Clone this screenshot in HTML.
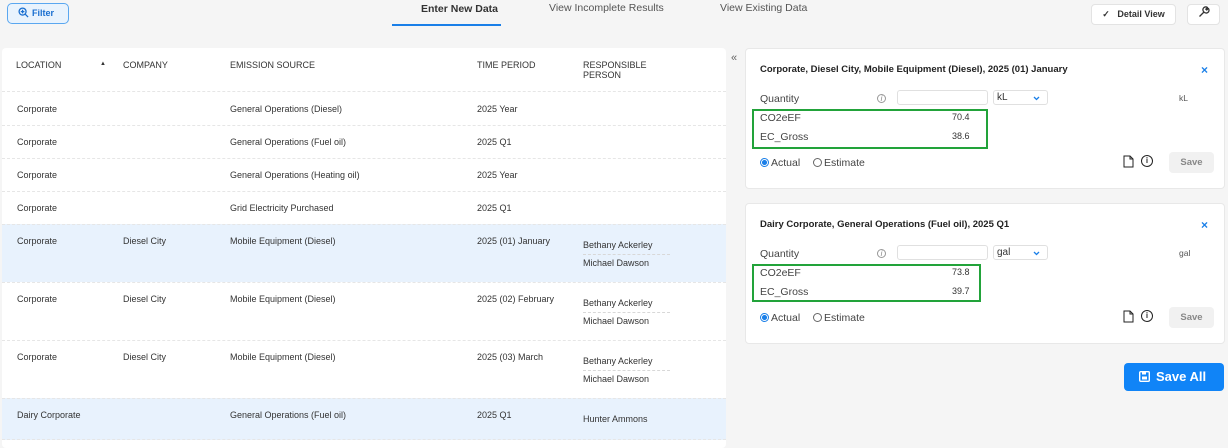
<!DOCTYPE html>
<html><head><style>
*{margin:0;padding:0;box-sizing:border-box}
body{width:1228px;height:444px;background:#f5f5f5;font-family:"Liberation Sans",sans-serif;color:#333;position:relative;overflow:hidden;font-size:9px}
.a{position:absolute;white-space:nowrap}
.panel{position:absolute;left:2px;top:48px;width:724px;height:400px;background:#fff;border-radius:4px}
.row{position:absolute;left:2px;width:724px;border-top:1px dashed #e6e6e6}
.hl{background:#e8f2fd}
.card{position:absolute;left:745px;width:480px;background:#fff;border:1px solid #e8e8e8;border-radius:4px}
.card .t{font-weight:bold;font-size:9.5px;color:#222}
.lbl{font-size:10.5px;color:#444}
.green{position:absolute;border:2px solid #22a33a}
.inp{position:absolute;border:1px solid #e0e0e0;border-radius:3px;background:#fff;height:15px}
.btn{position:absolute;background:#f1f1f1;border-radius:4px;color:#888;font-weight:bold;font-size:9.5px;text-align:center}
.radio{display:inline-block;width:9px;height:9px;border-radius:50%;border:1px solid #666;vertical-align:-1px;margin-right:2px}
.radio.on{border:1px solid #1a7fe8;background:radial-gradient(circle,#1a7fe8 2.3px,#fff 2.8px)}
</style></head><body>
<div class="a" style="left:7px;top:3px;width:62px;height:21px;border:1px solid #5aa7f0;border-radius:5px;background:#e9f3fd;color:#1a6fd0;font-weight:bold;font-size:9px;line-height:19px;padding-left:10px">
<svg width="11" height="11" viewBox="0 0 12 12" style="vertical-align:-2px;margin-right:3px"><circle cx="5" cy="5" r="3.8" fill="none" stroke="#1a6fd0" stroke-width="1.4"/><path d="M5 3v4M3 5h4M8 8l3 3" stroke="#1a6fd0" stroke-width="1.4"/></svg>Filter</div>
<div class="a" style="left:421px;top:3px;font-size:10.5px;font-weight:bold;color:#333">Enter New Data</div>
<div class="a" style="left:392px;top:24px;width:109px;height:2px;background:#1a7fe8"></div>
<div class="a" style="left:549px;top:2px;font-size:10.5px;color:#555">View Incomplete Results</div>
<div class="a" style="left:720px;top:2px;font-size:10.5px;color:#555">View Existing Data</div>
<div class="a" style="left:1091px;top:4px;width:85px;height:21px;background:#fff;border:1px solid #e3e3e3;border-radius:4px;font-size:9px;font-weight:bold;line-height:19px;text-align:center">✓&nbsp;&nbsp; Detail View</div>
<div class="a" style="left:1187px;top:4px;width:33px;height:21px;background:#fff;border:1px solid #e3e3e3;border-radius:4px;text-align:center;line-height:19px;font-size:11px">
<svg width="12" height="12" viewBox="0 0 12 12" style="vertical-align:-1px"><path d="M1.5 10.5l4.5-4.5M6 6a2.6 2.6 0 0 1 3.5-4.5l-1.7 1.7.9.9 1.7-1.7A2.6 2.6 0 0 1 6 6" fill="none" stroke="#333" stroke-width="1.3" stroke-linejoin="round"/></svg></div>

<div class="panel"></div>
<div class="a" style="left:16px;top:60px">LOCATION</div>
<div class="a" style="left:100px;top:61px;font-size:6px">▲</div>
<div class="a" style="left:123px;top:60px">COMPANY</div>
<div class="a" style="left:230px;top:60px">EMISSION SOURCE</div>
<div class="a" style="left:477px;top:60px">TIME PERIOD</div>
<div class="a" style="left:583px;top:60px;line-height:10px">RESPONSIBLE<br>PERSON</div>

<div class="row" style="top:91px;height:34px"><span class="a" style="left:15px;top:12px">Corporate</span><span class="a" style="left:228px;top:12px">General Operations (Diesel)</span><span class="a" style="left:475px;top:12px">2025 Year</span></div>
<div class="row" style="top:125px;height:33px"><span class="a" style="left:15px;top:11px">Corporate</span><span class="a" style="left:228px;top:11px">General Operations (Fuel oil)</span><span class="a" style="left:475px;top:11px">2025 Q1</span></div>
<div class="row" style="top:158px;height:33px"><span class="a" style="left:15px;top:11px">Corporate</span><span class="a" style="left:228px;top:11px">General Operations (Heating oil)</span><span class="a" style="left:475px;top:11px">2025 Year</span></div>
<div class="row" style="top:191px;height:33px"><span class="a" style="left:15px;top:11px">Corporate</span><span class="a" style="left:228px;top:11px">Grid Electricity Purchased</span><span class="a" style="left:475px;top:11px">2025 Q1</span></div>
<div class="row hl" style="top:224px;height:58px"><span class="a" style="left:15px;top:11px">Corporate</span><span class="a" style="left:121px;top:11px">Diesel City</span><span class="a" style="left:228px;top:11px">Mobile Equipment (Diesel)</span><span class="a" style="left:475px;top:11px">2025 (01) January</span><span class="a" style="left:581px;top:15px">Bethany Ackerley</span><span class="a" style="left:581px;top:29px;width:87px;border-top:1px dashed #d8d8d8"></span><span class="a" style="left:581px;top:33px">Michael Dawson</span></div>
<div class="row" style="top:282px;height:58px"><span class="a" style="left:15px;top:11px">Corporate</span><span class="a" style="left:121px;top:11px">Diesel City</span><span class="a" style="left:228px;top:11px">Mobile Equipment (Diesel)</span><span class="a" style="left:475px;top:11px">2025 (02) February</span><span class="a" style="left:581px;top:15px">Bethany Ackerley</span><span class="a" style="left:581px;top:29px;width:87px;border-top:1px dashed #d8d8d8"></span><span class="a" style="left:581px;top:33px">Michael Dawson</span></div>
<div class="row" style="top:340px;height:58px"><span class="a" style="left:15px;top:11px">Corporate</span><span class="a" style="left:121px;top:11px">Diesel City</span><span class="a" style="left:228px;top:11px">Mobile Equipment (Diesel)</span><span class="a" style="left:475px;top:11px">2025 (03) March</span><span class="a" style="left:581px;top:15px">Bethany Ackerley</span><span class="a" style="left:581px;top:29px;width:87px;border-top:1px dashed #d8d8d8"></span><span class="a" style="left:581px;top:33px">Michael Dawson</span></div>
<div class="row hl" style="top:398px;height:42px;border-bottom:1px dashed #e6e6e6"><span class="a" style="left:15px;top:11px">Dairy Corporate</span><span class="a" style="left:228px;top:11px">General Operations (Fuel oil)</span><span class="a" style="left:475px;top:11px">2025 Q1</span><span class="a" style="left:581px;top:15px">Hunter Ammons</span></div>

<div class="a" style="left:731px;top:52px;font-size:11px;color:#666">«</div>

<div class="card" style="top:48px;height:141px">
<div class="a t" style="left:14px;top:15px">Corporate, Diesel City, Mobile Equipment (Diesel), 2025 (01) January</div>
<div class="a" style="left:455px;top:14px;color:#1a7fe8;font-size:12px;font-weight:bold">×</div>
<div class="a lbl" style="left:14px;top:44px">Quantity</div>
<div class="a" style="left:131px;top:45px;font-size:8px;color:#888;border:1px solid #999;border-radius:50%;width:9px;height:9px;line-height:8px;text-align:center;font-style:italic">i</div>
<div class="inp" style="left:151px;top:41px;width:91px"></div>
<div class="inp" style="left:247px;top:41px;width:55px;padding-left:3px;font-size:10px;line-height:13px">kL<svg style="position:absolute;right:7px;top:5px" width="7" height="5" viewBox="0 0 7 5"><path d="M1 1l2.5 2.5L6 1" fill="none" stroke="#1a7fe8" stroke-width="1.3"/></svg></div>
<div class="a" style="left:433px;top:44px;font-size:8.5px;color:#555">kL</div>
<div class="green" style="left:6px;top:60px;width:236px;height:40px"></div>
<div class="a lbl" style="left:14px;top:63px">CO2eEF</div><div class="a" style="left:206px;top:63px">70.4</div>
<div class="a lbl" style="left:14px;top:82px">EC_Gross</div><div class="a" style="left:206px;top:82px">38.6</div>
<div class="a lbl" style="left:14px;top:108px"><span class="radio on"></span>Actual</div>
<div class="a lbl" style="left:67px;top:108px"><span class="radio"></span>Estimate</div>
<div class="a" style="left:377px;top:106px"><svg width="11" height="13" viewBox="0 0 11 13"><path d="M1 1h6l3 3v8H1z M7 1v3h3" fill="none" stroke="#222" stroke-width="1"/></svg></div>
<div class="a" style="left:395px;top:106px;width:12px;height:12px;border:1.3px solid #222;border-radius:50%;text-align:center;font-weight:bold;font-size:8px;line-height:10px">i</div>
<div class="btn" style="left:423px;top:103px;width:45px;height:21px;line-height:21px">Save</div>
</div>

<div class="card" style="top:203px;height:141px">
<div class="a t" style="left:14px;top:15px">Dairy Corporate, General Operations (Fuel oil), 2025 Q1</div>
<div class="a" style="left:455px;top:14px;color:#1a7fe8;font-size:12px;font-weight:bold">×</div>
<div class="a lbl" style="left:14px;top:44px">Quantity</div>
<div class="a" style="left:131px;top:45px;font-size:8px;color:#888;border:1px solid #999;border-radius:50%;width:9px;height:9px;line-height:8px;text-align:center;font-style:italic">i</div>
<div class="inp" style="left:151px;top:41px;width:91px"></div>
<div class="inp" style="left:247px;top:41px;width:55px;padding-left:3px;font-size:10px;line-height:13px">gal<svg style="position:absolute;right:7px;top:5px" width="7" height="5" viewBox="0 0 7 5"><path d="M1 1l2.5 2.5L6 1" fill="none" stroke="#1a7fe8" stroke-width="1.3"/></svg></div>
<div class="a" style="left:433px;top:44px;font-size:8.5px;color:#555">gal</div>
<div class="green" style="left:6px;top:60px;width:229px;height:38px"></div>
<div class="a lbl" style="left:14px;top:63px">CO2eEF</div><div class="a" style="left:206px;top:63px">73.8</div>
<div class="a lbl" style="left:14px;top:82px">EC_Gross</div><div class="a" style="left:206px;top:82px">39.7</div>
<div class="a lbl" style="left:14px;top:108px"><span class="radio on"></span>Actual</div>
<div class="a lbl" style="left:67px;top:108px"><span class="radio"></span>Estimate</div>
<div class="a" style="left:377px;top:106px"><svg width="11" height="13" viewBox="0 0 11 13"><path d="M1 1h6l3 3v8H1z M7 1v3h3" fill="none" stroke="#222" stroke-width="1"/></svg></div>
<div class="a" style="left:395px;top:106px;width:12px;height:12px;border:1.3px solid #222;border-radius:50%;text-align:center;font-weight:bold;font-size:8px;line-height:10px">i</div>
<div class="btn" style="left:423px;top:103px;width:45px;height:21px;line-height:21px">Save</div>
</div>

<div class="a" style="left:1124px;top:363px;width:100px;height:28px;background:#1084f7;border-radius:4px;color:#fff;font-weight:bold;font-size:13px;line-height:28px;padding-left:15px">
<svg width="11" height="11" viewBox="0 0 11 11" style="vertical-align:-1px;margin-right:6px"><rect x="0.7" y="0.7" width="9.6" height="9.6" rx="1" fill="none" stroke="#fff" stroke-width="1.4"/><rect x="3" y="5.5" width="5" height="3" fill="#fff"/><rect x="3" y="1" width="4" height="2.5" fill="#fff"/></svg>Save All</div>
</body></html>
